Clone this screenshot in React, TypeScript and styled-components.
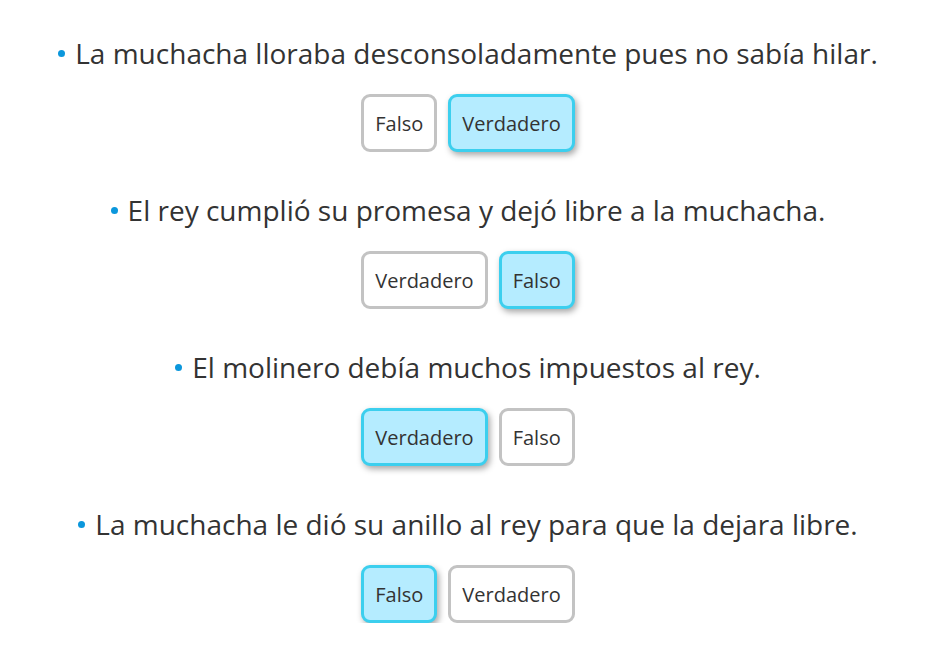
import React from 'react';
import styled, { createGlobalStyle } from 'styled-components';

type Question = {
	text: string;
	options: string[];
	selected: string;
};

const questions: Question[] = [
	{
		text: 'La muchacha lloraba desconsoladamente pues no sabía hilar.',
		options: ['Falso', 'Verdadero'],
		selected: 'Verdadero',
	},
	{
		text: 'El rey cumplió su promesa y dejó libre a la muchacha.',
		options: ['Verdadero', 'Falso'],
		selected: 'Falso',
	},
	{
		text: 'El molinero debía muchos impuestos al rey.',
		options: ['Verdadero', 'Falso'],
		selected: 'Verdadero',
	},
	{
		text: 'La muchacha le dió su anillo al rey para que la dejara libre.',
		options: ['Falso', 'Verdadero'],
		selected: 'Falso',
	},
];

const App = () => {
	return (
		<>
			<GlobalStyle />
			<Page>
				{questions.map((q) => (
					<Item key={q.text}>
						<Statement>
							<Bullet />
							{q.text}
						</Statement>
						<ButtonRow>
							{q.options.map((opt) => (
								<Choice key={opt} $active={opt === q.selected}>
									{opt}
								</Choice>
							))}
						</ButtonRow>
					</Item>
				))}
			</Page>
		</>
	);
};

export default App;

const GlobalStyle = createGlobalStyle`
	body {
		margin: 0;
		background: #ffffff;
		font-family: 'Open Sans', 'Noto Sans', sans-serif;
		color: #333333;
	}
`;

const Page = styled.div`
	display: flex;
	flex-direction: column;
	align-items: center;
	padding: 33px 0 0 4px;
	gap: 38px;
`;

const Item = styled.div`
	display: flex;
	flex-direction: column;
	align-items: center;
	gap: 21px;
`;

const Statement = styled.p`
	margin: 0;
	font-size: 28px;
	line-height: 40px;
	display: flex;
	align-items: center;
	white-space: nowrap;
`;

const Bullet = styled.span`
	width: 7px;
	height: 7px;
	border-radius: 50%;
	background: #0b97dc;
	margin-right: 10px;
	flex-shrink: 0;
`;

const ButtonRow = styled.div`
	display: flex;
	gap: 11px;
`;

const Choice = styled.button<{ $active: boolean }>`
	height: 58px;
	padding: 0 11px;
	font-family: inherit;
	font-size: 20px;
	color: #333333;
	border-radius: 9px;
	border: 3px solid ${(p) => (p.$active ? '#3ccfee' : '#c3c3c3')};
	background: ${(p) => (p.$active ? '#b5ecff' : '#ffffff')};
	box-shadow: ${(p) => (p.$active ? '2px 3px 6px rgba(0, 0, 0, 0.35)' : 'none')};
	cursor: pointer;
`;
